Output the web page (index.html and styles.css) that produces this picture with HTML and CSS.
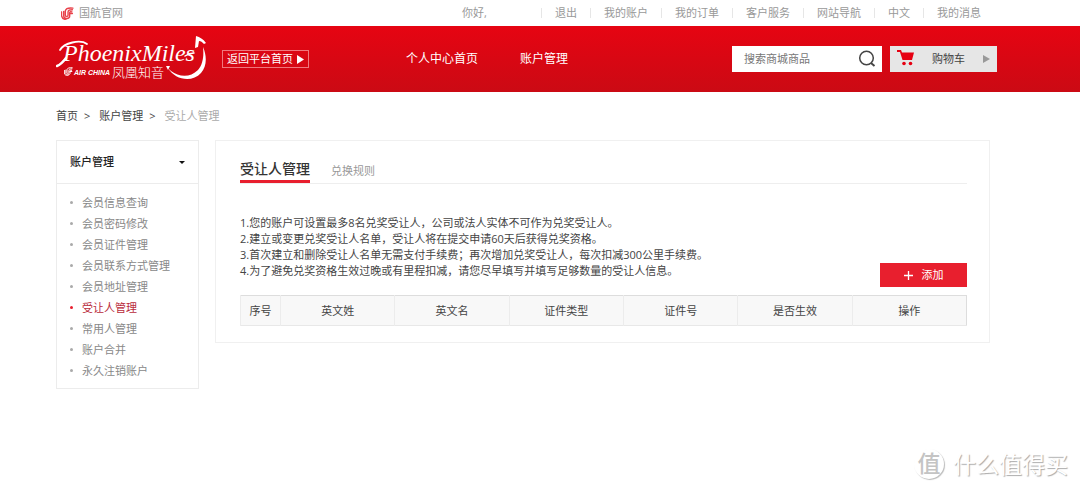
FILE: index.html
```
<!DOCTYPE html>
<html lang="zh-CN">
<head>
<meta charset="utf-8">
<title>受让人管理</title>
<link rel="stylesheet" href="styles.css">
</head>
<body>
<svg class="defs" width="0" height="0" aria-hidden="true">
  <symbol id="phoenix" viewBox="0 0 24 24">
    <path d="M22 2C14 1 9 3 8 7v8c0 3 5 3 5 0V9c0-3 3-4 8-4M20 9c-3-1-4 0-4 2v6c0 5-10 6-11 0V8M1 9v7c1 7 8 8 11 5M21 12h-5" fill="none" stroke="currentColor" stroke-width="2.600" stroke-linecap="round"/>
  </symbol>
</svg>
<div class="topbar">
  <a class="official" href="#"><svg class="official-icon"><use href="#phoenix"/></svg>国航官网</a>
  <nav class="topnav">
    <span class="greeting">你好,</span>
    <a href="#">退出</a><a href="#">我的账户</a><a href="#">我的订单</a><a href="#">客户服务</a><a href="#">网站导航</a><a href="#">中文</a><a href="#">我的消息</a>
  </nav>
</div>
<header class="header">
  <svg class="logo" width="152" height="46" viewBox="0 0 152 46" role="img" aria-label="Phoenix Miles">
    <text class="logo-script" x="7" y="25">PhoenixMiles</text>
    <path d="M4 14C8 7 24 3 31 8" fill="none" stroke="#fff" stroke-width="1.800" stroke-linecap="round"/>
    <path d="M1 30c3-1 6-4 9-8" fill="none" stroke="#fff" stroke-width="2.400" stroke-linecap="round"/>
    <path d="M129 20c3-2 5-3 9-3" fill="none" stroke="#fff" stroke-width="1.500" stroke-linecap="round"/>
    <use href="#phoenix" x="8" y="31" width="9" height="9" color="#fff"/>
    <text class="logo-air" x="18" y="39">AIR CHINA</text>
    <text class="logo-cn" x="56" y="41">凤凰知音</text>
    <path d="M112 32c7 12 24 15 33 5 6-7 6-17 2-26 1 9 0 17-5 23-8 8-19 7-27 1z" fill="#fff"/>
    <path d="M140 0c4 1 7 3 10 7l-2 1c-2-2-3-3-5-3l-1 6-3 1z" fill="#fff"/>
    <path d="M110 30l4 0-2 4z" fill="#fff"/>
  </svg>
  <a class="back" href="#">返回平台首页<svg width="7" height="9" viewBox="0 0 7 9"><path d="M0 0l7 4.500-7 4.500z" fill="#fff"/></svg></a>
  <nav class="mainnav"><a href="#">个人中心首页</a><a href="#">账户管理</a></nav>
  <form class="search">
    <input type="text" aria-label="搜索商城商品" placeholder="搜索商城商品">
    <button type="button" aria-label="搜索"><svg width="18" height="18" viewBox="0 0 18 18" fill="none" stroke="#444" stroke-width="1.500"><circle cx="8.500" cy="8" r="6.800"/><path d="M13 13l3.500 3" stroke-width="2"/></svg></button>
  </form>
  <a class="cart" href="#">
    <svg width="17" height="16" viewBox="0 0 17 16" fill="#e60012"><path d="M0 0h4l1 2.500h12L15 10H5.500L3 2H0z"/><circle cx="7" cy="13.500" r="1.800"/><circle cx="13.500" cy="13.500" r="1.800"/></svg>
    <span>购物车</span>
    <svg width="7" height="8" viewBox="0 0 7 8"><path d="M0 0l7 4-7 4z" fill="#999"/></svg>
  </a>
</header>
<nav class="crumbs" aria-label="路径">
  <a href="#">首页</a><span>&gt;</span><a href="#">账户管理</a><span>&gt;</span><span class="here">受让人管理</span>
</nav>
<div class="page">
  <aside class="side">
    <button class="side-title" type="button">账户管理<svg width="6" height="3" viewBox="0 0 6 3"><path d="M0 0h6l-3 3z" fill="#111"/></svg></button>
    <ul class="side-list">
      <li><a href="#">会员信息查询</a></li>
      <li><a href="#">会员密码修改</a></li>
      <li><a href="#">会员证件管理</a></li>
      <li><a href="#">会员联系方式管理</a></li>
      <li><a href="#">会员地址管理</a></li>
      <li class="active"><a href="#">受让人管理</a></li>
      <li><a href="#">常用人管理</a></li>
      <li><a href="#">账户合并</a></li>
      <li><a href="#">永久注销账户</a></li>
    </ul>
  </aside>
  <main class="panel">
    <div class="tabs">
      <h1>受让人管理</h1>
      <a href="#">兑换规则</a>
    </div>
    <div class="intro">
      <div class="notes">
        <p>1.您的账户可设置最多8名兑奖受让人，公司或法人实体不可作为兑奖受让人。</p>
        <p>2.建立或变更兑奖受让人名单，受让人将在提交申请60天后获得兑奖资格。</p>
        <p>3.首次建立和删除受让人名单无需支付手续费；再次增加兑奖受让人，每次扣减300公里手续费。</p>
        <p>4.为了避免兑奖资格生效过晚或有里程扣减，请您尽早填写并填写足够数量的受让人信息。</p>
      </div>
      <button class="add" type="button"><svg width="9" height="9" viewBox="0 0 9 9"><path d="M4.500 0v9M0 4.500h9" stroke="#fff" stroke-width="1.300"/></svg>添加</button>
    </div>
    <table class="grid">
      <thead><tr><th class="no">序号</th><th>英文姓</th><th>英文名</th><th>证件类型</th><th>证件号</th><th>是否生效</th><th>操作</th></tr></thead>
    </table>
  </main>
</div>
<div class="watermark"><span class="seal">值</span><span>什么值得买</span></div>
</body>
</html>
```
FILE: styles.css
```
* { box-sizing: border-box; }
body {
  margin: 0;
  min-height: 100vh;
  position: relative;
  background: #fff;
  color: #444;
  font: 11px/16px "Open Sans", "Noto Sans CJK SC", sans-serif;
}
a { color: inherit; text-decoration: none; }
button, input { font: inherit; border: 0; padding: 0; background: none; }
.defs { position: absolute; }

.topbar {
  display: flex;
  justify-content: space-between;
  align-items: center;
  height: 26px;
  padding: 0 86px 0 61px;
  color: #999;
}
.official { display: flex; align-items: center; gap: 5px; }
.official-icon { width: 13px; height: 13px; color: #e8414a; }
.topnav { display: flex; align-items: center; }
.greeting { width: 79px; }
.topnav a { padding: 0 13px; line-height: 10px; border-left: 1px solid #e6e6e6; }

.header {
  display: flex;
  align-items: center;
  height: 66px;
  padding: 0 83px 0 56px;
  color: #fff;
  background: linear-gradient(#e60412, #cb0a14);
}
.logo { flex: none; }
.logo text { fill: #fff; }
.logo-script { font: italic 400 24px "Liberation Serif", serif; }
.logo-air { font: italic 700 7px "Liberation Sans", sans-serif; }
.logo-cn { font: 300 13px "Noto Sans CJK SC", sans-serif; }
.back {
  display: flex;
  align-items: center;
  justify-content: space-between;
  width: 87px;
  height: 18px;
  margin-left: 14px;
  padding: 0 4px;
  border: 1px solid #f0777d;
}
.mainnav { display: flex; gap: 42px; margin-left: 97px; font-size: 12px; }
.search { display: flex; width: 150px; height: 26px; margin-left: auto; background: #fff; }
.search input { flex: 1; min-width: 0; padding-left: 12px; }
.search input::placeholder { color: #777; opacity: 1; }
.search button { display: flex; align-items: center; padding-right: 6px; }
.cart {
  display: flex;
  align-items: center;
  justify-content: space-between;
  width: 107px;
  height: 26px;
  margin-left: 8px;
  padding: 0 7px;
  color: #444;
  background: #e6e6e6;
}
.cart svg:first-child { margin-bottom: 3px; }

.crumbs { display: flex; align-items: center; gap: 6px; height: 48px; padding-left: 56px; }
.crumbs a + span { margin-right: 3px; }
.here { color: #aaa; }

.page { display: flex; align-items: flex-start; gap: 16px; padding: 0 90px 0 56px; }
.side { flex: none; width: 143px; border: 1px solid #ececec; }
.side-title {
  display: flex;
  align-items: center;
  justify-content: space-between;
  width: 100%;
  height: 42px;
  padding: 0 13px;
  color: #222;
  font-weight: 500;
}
.side-list { margin: 0; padding: 8px 0 7px; list-style: none; border-top: 1px solid #ececec; color: #888; }
.side-list li { display: flex; align-items: center; gap: 9px; height: 21px; padding-left: 13px; }
.side-list li::before { content: ""; width: 3px; height: 3px; border-radius: 50%; background: #aaa; }
.side-list .active { color: #b92b3b; }
.side-list .active::before { background: #e81f2e; }

.panel { flex: 1; min-width: 0; padding: 0 22px 16px 24px; border: 1px solid #f0f0f0; }
.tabs { display: flex; align-items: flex-end; gap: 21px; height: 43px; border-bottom: 1px solid #eee; color: #999; }
.tabs h1 {
  margin: 0;
  color: #333;
  font-size: 14px;
  font-weight: 500;
  line-height: 23px;
  border-bottom: 3px solid #e81f2e;
}
.tabs a { padding-bottom: 4px; }
.intro { display: flex; justify-content: space-between; align-items: flex-end; padding-top: 31px; }
.notes { padding-bottom: 8px; }
.notes p { margin: 0; }
.add {
  display: flex;
  align-items: center;
  justify-content: center;
  gap: 9px;
  flex: none;
  width: 87px;
  height: 24px;
  color: #fff;
  background: #e81f2e;
}
.grid {
  width: 100%;
  margin-top: 8px;
  table-layout: fixed;
  border-collapse: collapse;
  background: #f8f8f8;
  border: 1px solid #ddd;
  border-bottom-color: #e8e8e8;
}
.grid th { height: 30px; padding: 0; font-weight: 400; border-left: 1px solid #ececec; }
.grid .no { width: 40px; }

.watermark {
  position: absolute;
  right: 12px;
  bottom: 11px;
  display: flex;
  align-items: center;
  gap: 9px;
  color: #fff;
  font-size: 23px;
  line-height: 32px;
  text-shadow: 1px 1px 1px #aaa;
}
.seal {
  width: 30px;
  height: 30px;
  border-radius: 50%;
  color: #c4c4c4;
  font-size: 23px;
  font-weight: 500;
  line-height: 28px;
  text-align: center;
  text-shadow: none;
  box-shadow: 1px 1px 1px #bbb;
}
```
